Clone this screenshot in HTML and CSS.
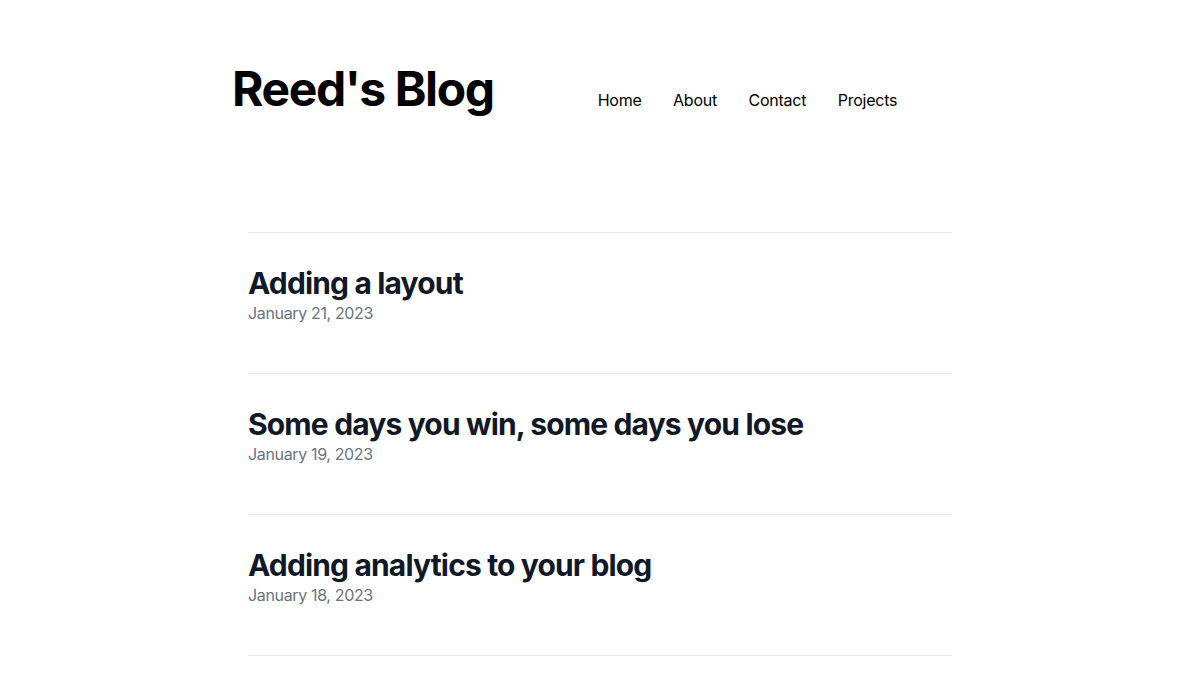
FILE: index.html
```html
<!DOCTYPE html>
<html lang="en">
<head>
<meta charset="utf-8">
<title>Reed's Blog</title>
<link rel="stylesheet" href="styles.css">
</head>
<body>
<header class="site-header">
  <h1 class="site-title">Reed's Blog</h1>
  <nav class="site-nav">
    <a href="#">Home</a>
    <a href="#">About</a>
    <a href="#">Contact</a>
    <a href="#">Projects</a>
  </nav>
</header>
<main class="posts">
  <article class="post">
    <h2 class="post-title">Adding a layout</h2>
    <p class="post-date">January 21, 2023</p>
  </article>
  <article class="post">
    <h2 class="post-title">Some days you win, some days you lose</h2>
    <p class="post-date">January 19, 2023</p>
  </article>
  <article class="post">
    <h2 class="post-title">Adding analytics to your blog</h2>
    <p class="post-date">January 18, 2023</p>
  </article>
</main>
</body>
</html>
```
FILE: styles.css
```css
*, *::before, *::after {
  box-sizing: border-box;
}
html, body {
  margin: 0;
  padding: 0;
  background: #fff;
}
body {
  font-family: Inter, "Noto Sans", sans-serif;
  color: #000;
}
.site-header {
  max-width: 768px;
  margin: 0 auto;
  padding: 65px 16px 0;
  display: flex;
  align-items: baseline;
}
.site-title {
  margin: 0;
  font-size: 48px;
  line-height: 48px;
  font-weight: 700;
  letter-spacing: -1.4px;
}
.site-nav {
  margin-left: 104px;
  display: flex;
  gap: 31.6px;
}
.site-nav a {
  color: #000;
  text-decoration: none;
  font-size: 16px;
  line-height: 24px;
  letter-spacing: -0.25px;
}
.posts {
  max-width: 768px;
  margin: 119px auto 0;
  padding: 0 32px;
}
.post {
  border-top: 1px solid #e5e7eb;
  padding: 32px 0 48px;
}
.post:last-child {
  border-bottom: 1px solid #e5e7eb;
}
.post-title {
  margin: 0;
  font-size: 30px;
  line-height: 36px;
  font-weight: 700;
  color: #111827;
  letter-spacing: -0.85px;
}
.post-date {
  margin: 0;
  font-size: 16px;
  line-height: 24px;
  color: #6b7280;
  letter-spacing: -0.35px;
}
```
